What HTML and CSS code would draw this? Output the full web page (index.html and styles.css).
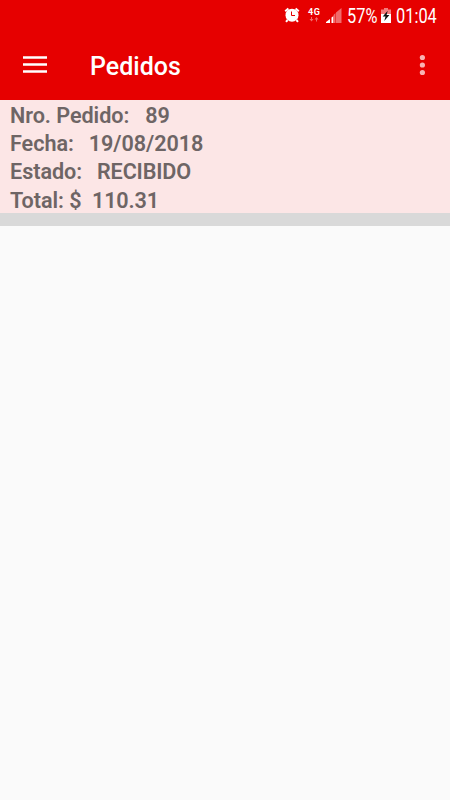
FILE: index.html
```html
<!DOCTYPE html>
<html lang="es">
<head>
<meta charset="UTF-8" />
<meta name="viewport" content="width=device-width, initial-scale=1.0">
<title>Pedidos</title>
<link rel="stylesheet" href="styles.css">
</head>
<body>
<header>
  <div class="status-bar">
    <svg class="alarm" width="16" height="16" viewBox="0 0 16 16">
      <circle cx="8" cy="8.2" r="6.5" fill="#fff" />
      <path d="M1.2 4.2L4.4 1.4M14.8 4.2L11.6 1.4M3.6 13L2 14.8M12.4 13L14 14.8" stroke="#fff" stroke-width="2" />
      <path d="M7.5 4.5V8.5H11" fill="none" stroke="#e60000" stroke-width="1" />
    </svg>
    <div class="network">
      <span>4G</span>
      <svg width="10" height="6" viewBox="0 0 10 6">
        <path d="M2 0H3V2H4.5L2.5 4.5L0.5 2H2zM7 4.5V2.5H5.5L7.5 0L9.5 2.5H8V4.5z" fill="#f06c6c" />
      </svg>
    </div>
    <svg class="signal" width="16" height="15" viewBox="0 0 16 15">
      <path d="M0 15V14L4 11V15zM5.5 15V9.5L7.5 8V15z" fill="#fff" />
      <path d="M7.5 15V7L9.5 5V15zM10 15V4.5L15.5 0V15z" fill="#f06c6c" />
    </svg>
    <span class="percent">57%</span>
    <svg class="battery" width="10" height="15" viewBox="0 0 10 15">
      <path d="M0 1.5H3V0H7V1.5H10V7H0z" fill="#f47b7b" />
      <path d="M0 6H10V15H0z" fill="#fff" />
      <path d="M6.7 2.8L1.7 8.5H4.5L3.3 13L8.4 7H5.6z" fill="#111" />
    </svg>
    <span class="clock">01:04</span>
  </div>
  <div class="toolbar">
    <button class="menu" aria-label="Menu">
      <svg width="24" height="17" viewBox="0 0 24 17">
        <path d="M0 1.5H24M0 8.5H24M0 15.5H24" stroke="#fff" stroke-width="2.7" />
      </svg>
    </button>
    <h1>Pedidos</h1>
    <button class="more" aria-label="Opciones">
      <svg width="6" height="22" viewBox="0 0 6 22">
        <g fill="#f9b3b3">
          <circle cx="3.4" cy="3.5" r="2.6" />
          <circle cx="3.4" cy="11" r="2.6" />
          <circle cx="3.4" cy="18.5" r="2.6" />
        </g>
      </svg>
    </button>
  </div>
</header>

<main>
  <div class="order">
    <p><span class="label nro">Nro. Pedido:</span><span>89</span></p>
    <p><span class="label">Fecha:</span><span>19/08/2018</span></p>
    <p><span class="label">Estado:</span><span class="state">RECIBIDO</span></p>
    <p><span class="label total">Total: $</span><span class="state">110.31</span></p>
  </div>
</main>
</body>
</html>
```
FILE: styles.css
```css
body {
  margin: 0;
  min-height: 100vh;
  font-family: Roboto, sans-serif;
  background: #fafafa;
}

header {
  height: 100px;
  background: #e60000;
  color: #fff;
}

.status-bar {
  display: flex;
  justify-content: flex-end;
  height: 32px;
  padding-right: 12px;
  font-size: 19.5px;
  line-height: 33px;
}

.status-bar svg {
  display: block;
}

.alarm {
  margin-top: 7px;
}

.network {
  width: 13px;
  margin: 8px 0 0 8px;
  font-size: 9px;
  font-weight: bold;
  line-height: 9px;
  letter-spacing: 0.5px;
}

.network svg {
  margin-left: 1px;
}

.signal {
  margin: 8px 0 0 5px;
}

.percent {
  width: 31px;
  margin-left: 5px;
}

.battery {
  margin: 8px 0 0 3px;
}

.clock {
  width: 42px;
  margin-left: 5px;
}

.percent,
.clock {
  white-space: nowrap;
  transform: scaleX(0.84);
  transform-origin: left;
}

.toolbar {
  display: flex;
  align-items: center;
  height: 68px;
  padding: 0 25px 0 23px;
}

.toolbar button {
  display: flex;
  padding: 0;
  border: none;
  background: none;
  cursor: pointer;
}

.menu {
  margin-bottom: 3px;
}

.more {
  margin-bottom: 2px;
}

h1 {
  flex: 1;
  margin: 2px 0 0 43px;
  font-size: 25px;
  font-weight: 500;
  line-height: 66px;
}

.order {
  box-sizing: border-box;
  height: 126px;
  padding: 2px 10px 0;
  border-bottom: 13px solid #d9d9d9;
  background: #fce6e6;
  color: #6e6565;
  font-size: 21.6px;
  font-weight: 600;
}

.order p {
  display: flex;
  margin: 0;
  line-height: 28.2px;
  letter-spacing: -0.05px;
}

.label {
  margin-right: 15px;
}

.nro {
  margin-right: 16px;
}

.total {
  margin-right: 10.5px;
}

.state {
  letter-spacing: -0.15px;
}
```
